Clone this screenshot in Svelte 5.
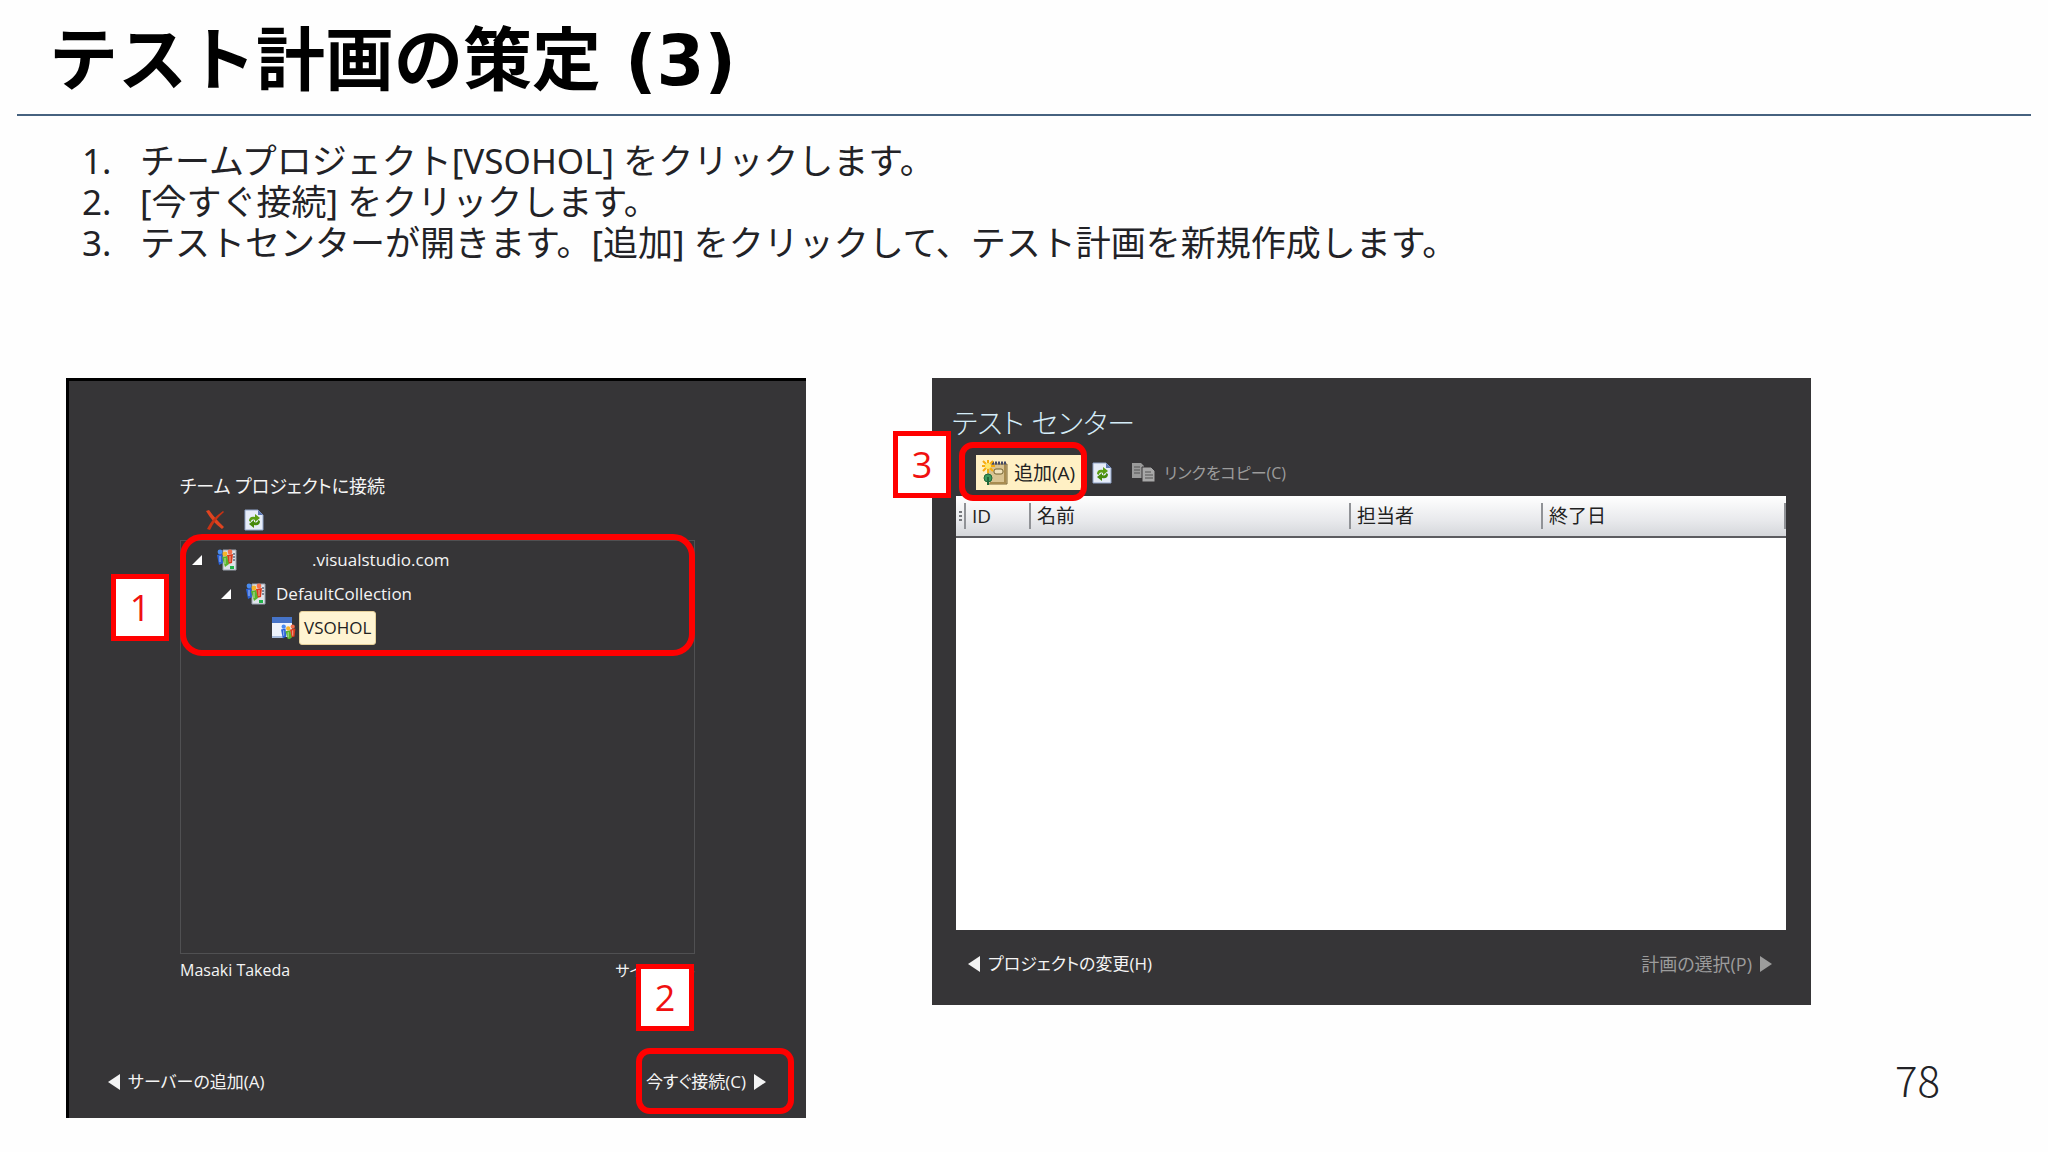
<script>
  const steps = [
    'チームプロジェクト[VSOHOL] をクリックします。',
    '[今すぐ接続] をクリックします。',
    'テストセンターが開きます。[追加] をクリックして、テスト計画を新規作成します。'
  ]

  const columns = [
    { key: 'id', label: 'ID' },
    { key: 'name', label: '名前' },
    { key: 'owner', label: '担当者' },
    { key: 'end', label: '終了日' }
  ]

  let selected = $state('VSOHOL')
</script>

{#snippet refreshIcon()}
  <svg class="icon" viewBox="0 0 20 22" width="20" height="22" aria-hidden="true">
    <path d="M1 1h13l5 5v15H1z" fill="#e6ecf8" stroke="#8fa3c8" />
    <path d="M14 1v5h5z" fill="#5d78b0" />
    <path d="M5 12c0-4 3-5 6-4V5l5 4-5 4v-2c-3-1-4 0-4 2z" fill="#5a9e12" />
    <path d="M16 12c0 4-3 5-6 4v3l-5-4 5-4v2c3 1 4 0 4-2z" fill="#468a0c" />
  </svg>
{/snippet}

{#snippet people()}
  <path d="M0 6l5-1 1 9-4 2z" fill="#2a62d8" />
  <circle cx="3" cy="3" r="2.4" fill="#4a8cf0" />
  <path d="M10 6l6-1-1 9-4 1z" fill="#dc3c1c" />
  <circle cx="13" cy="3" r="2.4" fill="#f4704c" />
  <path d="M5 8l5-1 2 8-4 3z" fill="#58b42c" />
  <circle cx="8" cy="5" r="2.4" fill="#f6b42a" />
  <path d="M3 7v6M8 9v6M13 7v6" stroke="#fff" stroke-opacity=".6" />
{/snippet}

{#snippet serverIcon()}
  <svg class="icon" viewBox="0 0 20 22" width="20" height="22" aria-hidden="true">
    <path d="M6 1h13v20H6z" fill="#dfe3ea" stroke="#9aa3b0" />
    <path d="M17 4v9" stroke="#7c8798" stroke-width="2" stroke-dasharray="2 1" />
    <rect x="13" y="17" width="4" height="3" fill="#22b34a" />
    {@render people()}
  </svg>
{/snippet}

{#snippet arrow(dir)}
  <svg class="icon" viewBox="0 0 12 16" width="12" height="16" aria-hidden="true">
    <path d={dir === 'left' ? 'M12 0v16L0 8z' : 'M0 0v16l12-8z'} fill="currentColor" />
  </svg>
{/snippet}

{#snippet expander()}
  <svg class="expander" viewBox="0 0 10 10" width="10" height="10" aria-hidden="true">
    <path d="M10 0v10H0z" fill="#fff" />
  </svg>
{/snippet}

<main class="slide">
  <h1>テスト計画の策定 (3)</h1>

  <ol class="steps">
    {#each steps as step}
      <li>{step}</li>
    {/each}
  </ol>

  <div class="shots">
    <section class="panel connect">
      <div class="project">
        <h2>チーム プロジェクトに接続</h2>
        <div class="tools">
          <button type="button" aria-label="削除">
            <svg class="icon" viewBox="0 0 20 22" width="20" height="22" aria-hidden="true">
              <path d="M1 2l3-1c4 6 9 11 15 17l-2 2C10 15 5 9 1 2z" fill="#e04420" />
              <path d="M18 2l1 1C13 8 8 14 5 21l-3-1C6 12 11 7 18 2z" fill="#c83214" />
            </svg>
          </button>
          <button type="button" aria-label="最新の情報に更新">{@render refreshIcon()}</button>
        </div>

        <div class="tree">
          <ul>
            <li>
              {@render expander()}
              {@render serverIcon()}
              <button type="button" class="host">.visualstudio.com</button>
            </li>
            <li class="level-2">
              {@render expander()}
              {@render serverIcon()}
              <button type="button">DefaultCollection</button>
            </li>
            <li class="level-3">
              <svg class="icon" viewBox="0 0 24 22" width="24" height="22" aria-hidden="true">
                <rect x="0" y="0" width="20" height="20" fill="#eef3fb" />
                <rect x="0" y="0" width="20" height="6" fill="#4674c8" />
                <path d="M0 20h12" stroke="#a8bcdc" stroke-width="2" />
                <g transform="translate(9 7) scale(.9)">{@render people()}</g>
              </svg>
              <button
                type="button"
                class="node"
                class:selected={selected === 'VSOHOL'}
                onclick={() => (selected = 'VSOHOL')}
              >VSOHOL</button>
            </li>
          </ul>
          <span class="mark mark-tree"></span>
          <span class="badge badge-1">1</span>
        </div>

        <div class="account">
          <span>Masaki Takeda</span>
          <button type="button" class="sign-out">サインアウト</button>
          <span class="badge badge-2">2</span>
        </div>
      </div>

      <div class="nav">
        <button type="button">{@render arrow('left')}サーバーの追加(A)</button>
        <button type="button" class="now">
          今すぐ接続(C){@render arrow('right')}
          <span class="mark mark-now"></span>
        </button>
      </div>
    </section>

    <section class="panel center">
      <h2 class="big">テスト センター</h2>
      <div class="bar">
        <button type="button" class="add">
          <svg class="icon" viewBox="0 0 26 26" width="26" height="26" aria-hidden="true">
            <path d="M6 4h19v20H6z" fill="#d9c391" stroke="#7a6434" />
            <path d="M23 5v18H8" fill="none" stroke="#a88c50" stroke-width="2" />
            <path d="M10 3h15" stroke="#444a66" stroke-width="3" stroke-dasharray="2 1" />
            <rect x="12" y="9" width="9" height="5" rx="2" fill="#f1e3bd" stroke="#70602f" />
            <path d="M6 0v13M0 6h13M1 1l10 10M11 1L1 11" stroke="#f5ab10" stroke-width="2" />
            <circle cx="6" cy="6" r="3" fill="#ffe66a" />
            <circle cx="6" cy="18" r="4" fill="#3c9a5c" stroke="#20683a" />
            <path d="M6 17v8" stroke="#20683a" stroke-width="2" />
          </svg>
          追加(A)
          <span class="mark mark-add"></span>
        </button>
        <button type="button" aria-label="更新">{@render refreshIcon()}</button>
        <button type="button" class="copy" disabled>
          <svg class="icon" viewBox="0 0 24 20" width="24" height="20" aria-hidden="true">
            <path d="M0 0h9l3 3v12H0z" fill="#9a9a9a" />
            <path d="M2 4h6M2 7h6M2 10h6" stroke="#555" />
            <path d="M10 4h9l4 4v11H10z" fill="#a8a8a8" stroke="#363537" />
            <path d="M13 9h6M13 12h8M13 15h8" stroke="#555" />
          </svg>
          リンクをコピー(C)
        </button>
        <span class="badge badge-3">3</span>
      </div>

      <div class="grid">
        <table>
          <thead>
            <tr>
              <td class="grip"></td>
              {#each columns as column (column.key)}
                <th class={column.key} scope="col">{column.label}</th>
              {/each}
            </tr>
          </thead>
        </table>
      </div>

      <div class="nav">
        <button type="button">{@render arrow('left')}プロジェクトの変更(H)</button>
        <button type="button" class="plan" disabled>計画の選択(P){@render arrow('right')}</button>
      </div>
    </section>

    <span class="page">78</span>
  </div>
</main>

<style>
  :global(body) {
    background: #fefefe;
  }
  .slide {
    box-sizing: border-box;
    min-height: 100vh;
    overflow: hidden;
    color: #222226;
    font-family: 'Noto Sans', 'Noto Sans CJK JP', sans-serif;
  }
  h1 {
    margin: 0 17px;
    padding: 12px 32px 3px;
    border-bottom: 2px solid #46627f;
    color: #000;
    font-family: 'DejaVu Sans', 'Noto Sans CJK JP', sans-serif;
    font-size: 69px;
    font-weight: 700;
    line-height: 99px;
  }
  .steps {
    margin: 24px 0 0;
    padding: 0 0 0 140px;
    font-size: 35px;
    line-height: 41px;
    list-style: none;
    counter-reset: step;
  }
  .steps li {
    position: relative;
    counter-increment: step;
  }
  .steps li::before {
    content: counter(step) '.';
    position: absolute;
    left: -58px;
  }
  .shots {
    display: grid;
    grid-template-columns: 740fr 126fr 879fr 129fr;
    align-items: start;
    margin-top: 115px;
    padding: 0 108px 0 66px;
  }
  .panel {
    box-sizing: border-box;
    background: #363537;
    color: #f4f4f4;
    font-family: 'Open Sans', 'Noto Sans CJK JP', sans-serif;
    font-size: 17px;
    line-height: 24px;
    font-feature-settings: 'palt';
  }
  .center {
    grid-column: 3;
    padding: 24px 25px 29px 24px;
  }
  .connect {
    padding: 91px 40px 24px 39px;
    border-top: 3px solid #000;
    border-left: 3px solid #000;
  }
  button {
    display: inline-flex;
    align-items: center;
    padding: 0;
    border: 0;
    background: none;
    color: inherit;
    font: inherit;
    font-feature-settings: inherit;
    cursor: pointer;
  }
  button:disabled {
    color: #9c9c9c;
    cursor: default;
  }
  .icon,
  .expander {
    flex: none;
  }
  h2 {
    margin: 0;
    font-size: 18px;
    font-weight: 400;
    line-height: 28px;
  }
  .project {
    margin: 0 71px 0 72px;
  }
  .tools {
    display: flex;
    gap: 19px;
    padding: 9px 25px;
  }
  .tree {
    position: relative;
    box-sizing: border-box;
    min-height: 414px;
    border: 1px solid #505052;
  }
  .tree ul {
    margin: 0;
    padding: 2px 0 0 11px;
    list-style: none;
  }
  .tree li {
    display: flex;
    align-items: center;
    height: 34px;
  }
  .expander {
    margin-right: 15px;
  }
  .level-2 {
    padding-left: 29px;
  }
  .level-3 {
    padding-left: 80px;
  }
  .tree li button {
    margin-left: 10px;
  }
  .tree li .host {
    margin-left: 75px;
  }
  .tree li .node {
    height: 34px;
    margin-left: 3px;
    padding: 0 4px;
    border: 1px solid transparent;
    border-radius: 3px;
  }
  .tree li .node.selected {
    border-color: #e6d09a;
    background: #fff4d2;
    color: #222;
  }
  .account {
    position: relative;
    display: flex;
    justify-content: space-between;
    margin-top: 4px;
    font-size: 16px;
  }
  .sign-out {
    font-size: 15px;
  }
  .nav {
    display: flex;
    justify-content: space-between;
  }
  .nav button {
    gap: 8px;
  }
  .nav .plan {
    font-size: 18px;
  }
  .connect .nav {
    margin-top: 88px;
  }
  .center .nav {
    margin: 22px 14px 0 12px;
  }
  .mark {
    position: absolute;
    box-sizing: border-box;
    border: 6px solid #ff0000;
    border-radius: 14px;
    pointer-events: none;
  }
  .mark-tree {
    top: -7px;
    right: -1px;
    left: -1px;
    height: 122px;
    border-radius: 22px;
  }
  .mark-now {
    inset: -22px -28px -20px -10px;
  }
  .mark-add {
    inset: -13px -6px -11px -17px;
  }
  .now,
  .add {
    position: relative;
  }
  .badge {
    position: absolute;
    z-index: 1;
    box-sizing: border-box;
    width: 58px;
    height: 67px;
    border: 5px solid #ff0000;
    background: #fff;
    color: #f01010;
    font-size: 36px;
    line-height: 57px;
    text-align: center;
  }
  .badge-1 {
    top: 33px;
    left: -70px;
  }
  .badge-2 {
    top: 6px;
    right: 1px;
  }
  .badge-3 {
    top: -24px;
    left: -63px;
  }
  .big {
    margin-left: -4px;
    color: #d4ecf8;
    font-size: 28px;
    font-weight: 300;
    line-height: 42px;
  }
  .bar {
    position: relative;
    display: flex;
    align-items: center;
    margin-top: 11px;
    padding: 0 0 6px 20px;
  }
  .add {
    gap: 6px;
    height: 35px;
    margin-right: 11px;
    padding: 0 6px;
    background: #fff0c4;
    color: #222;
    font-size: 19px;
  }
  .copy {
    gap: 8px;
    margin-left: 20px;
    font-size: 16px;
  }
  .grid {
    min-height: 434px;
    background: #fff;
  }
  table {
    width: 100%;
    border-collapse: collapse;
    border-bottom: 2px solid #5c5c60;
    background: linear-gradient(#fff, #e8e9ec 60%, #d4d6da);
    color: #222;
    font-size: 19px;
    table-layout: fixed;
  }
  th,
  td {
    position: relative;
    height: 40px;
    padding: 0 0 0 8px;
    font-weight: 400;
    text-align: left;
  }
  th::before,
  th:last-child::after {
    content: '';
    position: absolute;
    top: 7px;
    bottom: 7px;
    left: 0;
    width: 2px;
    background: #909296;
  }
  th:last-child::after {
    right: 0;
    left: auto;
  }
  td.grip {
    width: 8px;
    padding: 0;
  }
  td.grip::before {
    content: '';
    position: absolute;
    top: 15px;
    left: 3px;
    width: 3px;
    height: 10px;
    background: repeating-linear-gradient(#77797d 0 2px, transparent 2px 4px);
  }
  .id {
    width: 57px;
  }
  .name {
    width: 312px;
  }
  .owner {
    width: 184px;
  }
  .page {
    grid-column: 4;
    align-self: end;
    margin-bottom: 15px;
    font-family: 'Noto Sans CJK JP', 'Noto Sans', sans-serif;
    font-size: 42px;
    font-weight: 300;
    line-height: 48px;
    text-align: right;
  }
</style>
